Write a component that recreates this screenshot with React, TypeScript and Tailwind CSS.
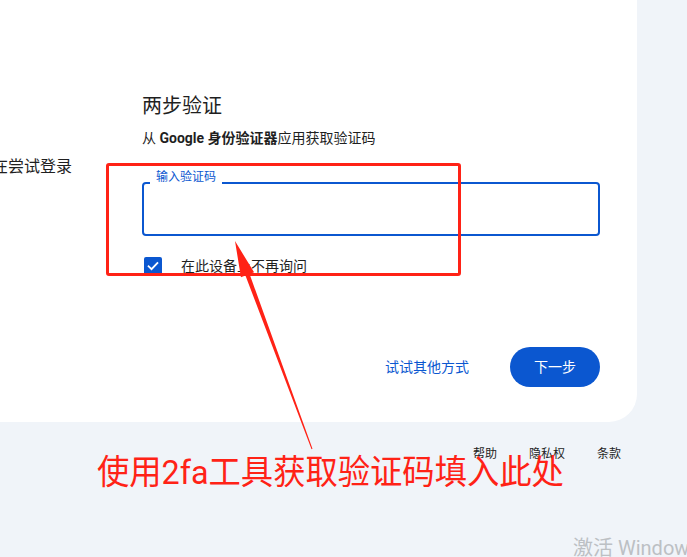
import React from "react";

const font = "font-['Roboto','Noto_Sans_CJK_SC',sans-serif]";

function Arrow() {
  // tip near the input, tail down by the note
  const tip = [235, 241];
  const tail = [312, 449];
  const dx = tail[0] - tip[0];
  const dy = tail[1] - tip[1];
  const len = Math.hypot(dx, dy);
  const u = [dx / len, dy / len];
  const n = [u[1], -u[0]];
  const head = 36;
  const base = [tip[0] + u[0] * head, tip[1] + u[1] * head];
  const pt = (p: number[], k: number) => `${p[0] + n[0] * k},${p[1] + n[1] * k}`;
  const points = [
    `${tip[0]},${tip[1]}`,
    pt(base, 7),
    pt(base, 2.2),
    `${tail[0] + n[0] * 0.5},${tail[1] + n[1] * 0.5}`,
    `${tail[0] - n[0] * 0.5},${tail[1] - n[1] * 0.5}`,
    pt(base, -2.2),
    pt(base, -7),
  ].join(" ");
  return (
    <svg className="absolute left-0 top-0 pointer-events-none" width="687" height="557">
      <polygon points={points} fill="#ff2216" />
    </svg>
  );
}

export default function App() {
  return (
    <div className={`relative w-[687px] h-[557px] overflow-hidden bg-[#f0f4f9] ${font} text-[#1f1f1f]`}>
      <div className="mt-[-28px] w-[637px] h-[450px] bg-white rounded-r-[28px] flex">
        <div className="w-[142px] shrink-0 pt-[183px]">
          <p className="ml-[-24px] text-base leading-6 whitespace-nowrap">正在尝试登录</p>
        </div>

        <div className="w-[458px] pt-[120px]">
          <h1 className="text-[20px] leading-7 font-normal">两步验证</h1>
          <p className="mt-2 text-sm leading-5">
            从 <span className="font-bold">Google 身份验证器</span>应用获取验证码
          </p>

          <div className="relative mt-[34px] h-[54px] border-2 border-[#0b57d0] rounded-[4px]">
            <span className="absolute left-[6px] top-[-17px] px-[6px] bg-white text-xs leading-5 text-[#0b57d0]">
              输入验证码
            </span>
          </div>

          <label className="mt-[21px] ml-[2px] flex items-center h-[18px] gap-[19px]">
            <span className="w-[18px] h-[18px] rounded-[2px] bg-[#0b57d0] flex items-center justify-center">
              <svg width="14" height="14" viewBox="0 0 24 24" fill="none" stroke="white" strokeWidth="3.2" strokeLinecap="square">
                <path d="M4.5 12.5l5 5L19.5 7" />
              </svg>
            </span>
            <span className="text-sm leading-5">在此设备上不再询问</span>
          </label>

          <div className="mt-[72px] flex items-center justify-end gap-[41px]">
            <button className="text-sm leading-5 text-[#0b57d0]">试试其他方式</button>
            <button className="w-[90px] h-10 rounded-full bg-[#0b57d0] text-white text-sm">下一步</button>
          </div>
        </div>
      </div>

      <div className="mt-6 pr-[66px] flex justify-end gap-8 text-xs leading-4 text-[#1f1f1f]">
        <span>帮助</span>
        <span>隐私权</span>
        <span>条款</span>
      </div>

      <div className="absolute left-[106px] top-[163px] w-[355px] h-[113px] border-[3px] border-[#ff2216] rounded-[3px]" />
      <Arrow />

      <p className="absolute left-[97px] top-[452px] text-[34px] leading-[40px] text-[#ff2216] whitespace-nowrap origin-left scale-x-[0.95]">
        使用2fa工具获取验证码填入此处
      </p>

      <p className="absolute left-[573px] top-[536px] text-[20px] leading-6 text-[#bcc0c4] whitespace-nowrap">
        激活 Windows
      </p>
    </div>
  );
}
